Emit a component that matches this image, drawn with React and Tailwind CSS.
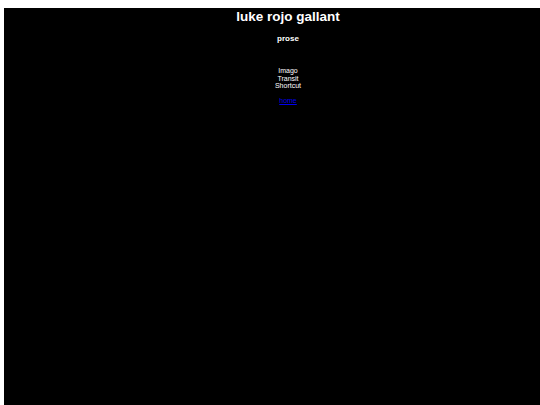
import React from 'react';

const links = ['Imago', 'Transit', 'Shortcut'];

export default function App() {
  return (
    <div className="min-h-[405px] w-[540px] overflow-hidden bg-white pt-[8px] pl-[4px] font-['Liberation_Sans',Arial,sans-serif]">
      <div className="min-h-[397px] w-[568px] bg-black text-center text-white">
        <h1 className="pt-[1px] text-[13.5px] leading-[16px] font-bold">luke rojo gallant</h1>

        <h2 className="mt-[9px] text-[8px] leading-[10px] font-bold">prose</h2>

        <ul className="mt-[23px] text-[7px] leading-[7.7px]">
          {links.map(name => (
            <li key={name}>{name}</li>
          ))}
        </ul>

        <a href="#" className="mt-[7px] block text-[7px] leading-[7.7px] text-[#0000ee] underline">
          home
        </a>
      </div>
    </div>
  );
}
